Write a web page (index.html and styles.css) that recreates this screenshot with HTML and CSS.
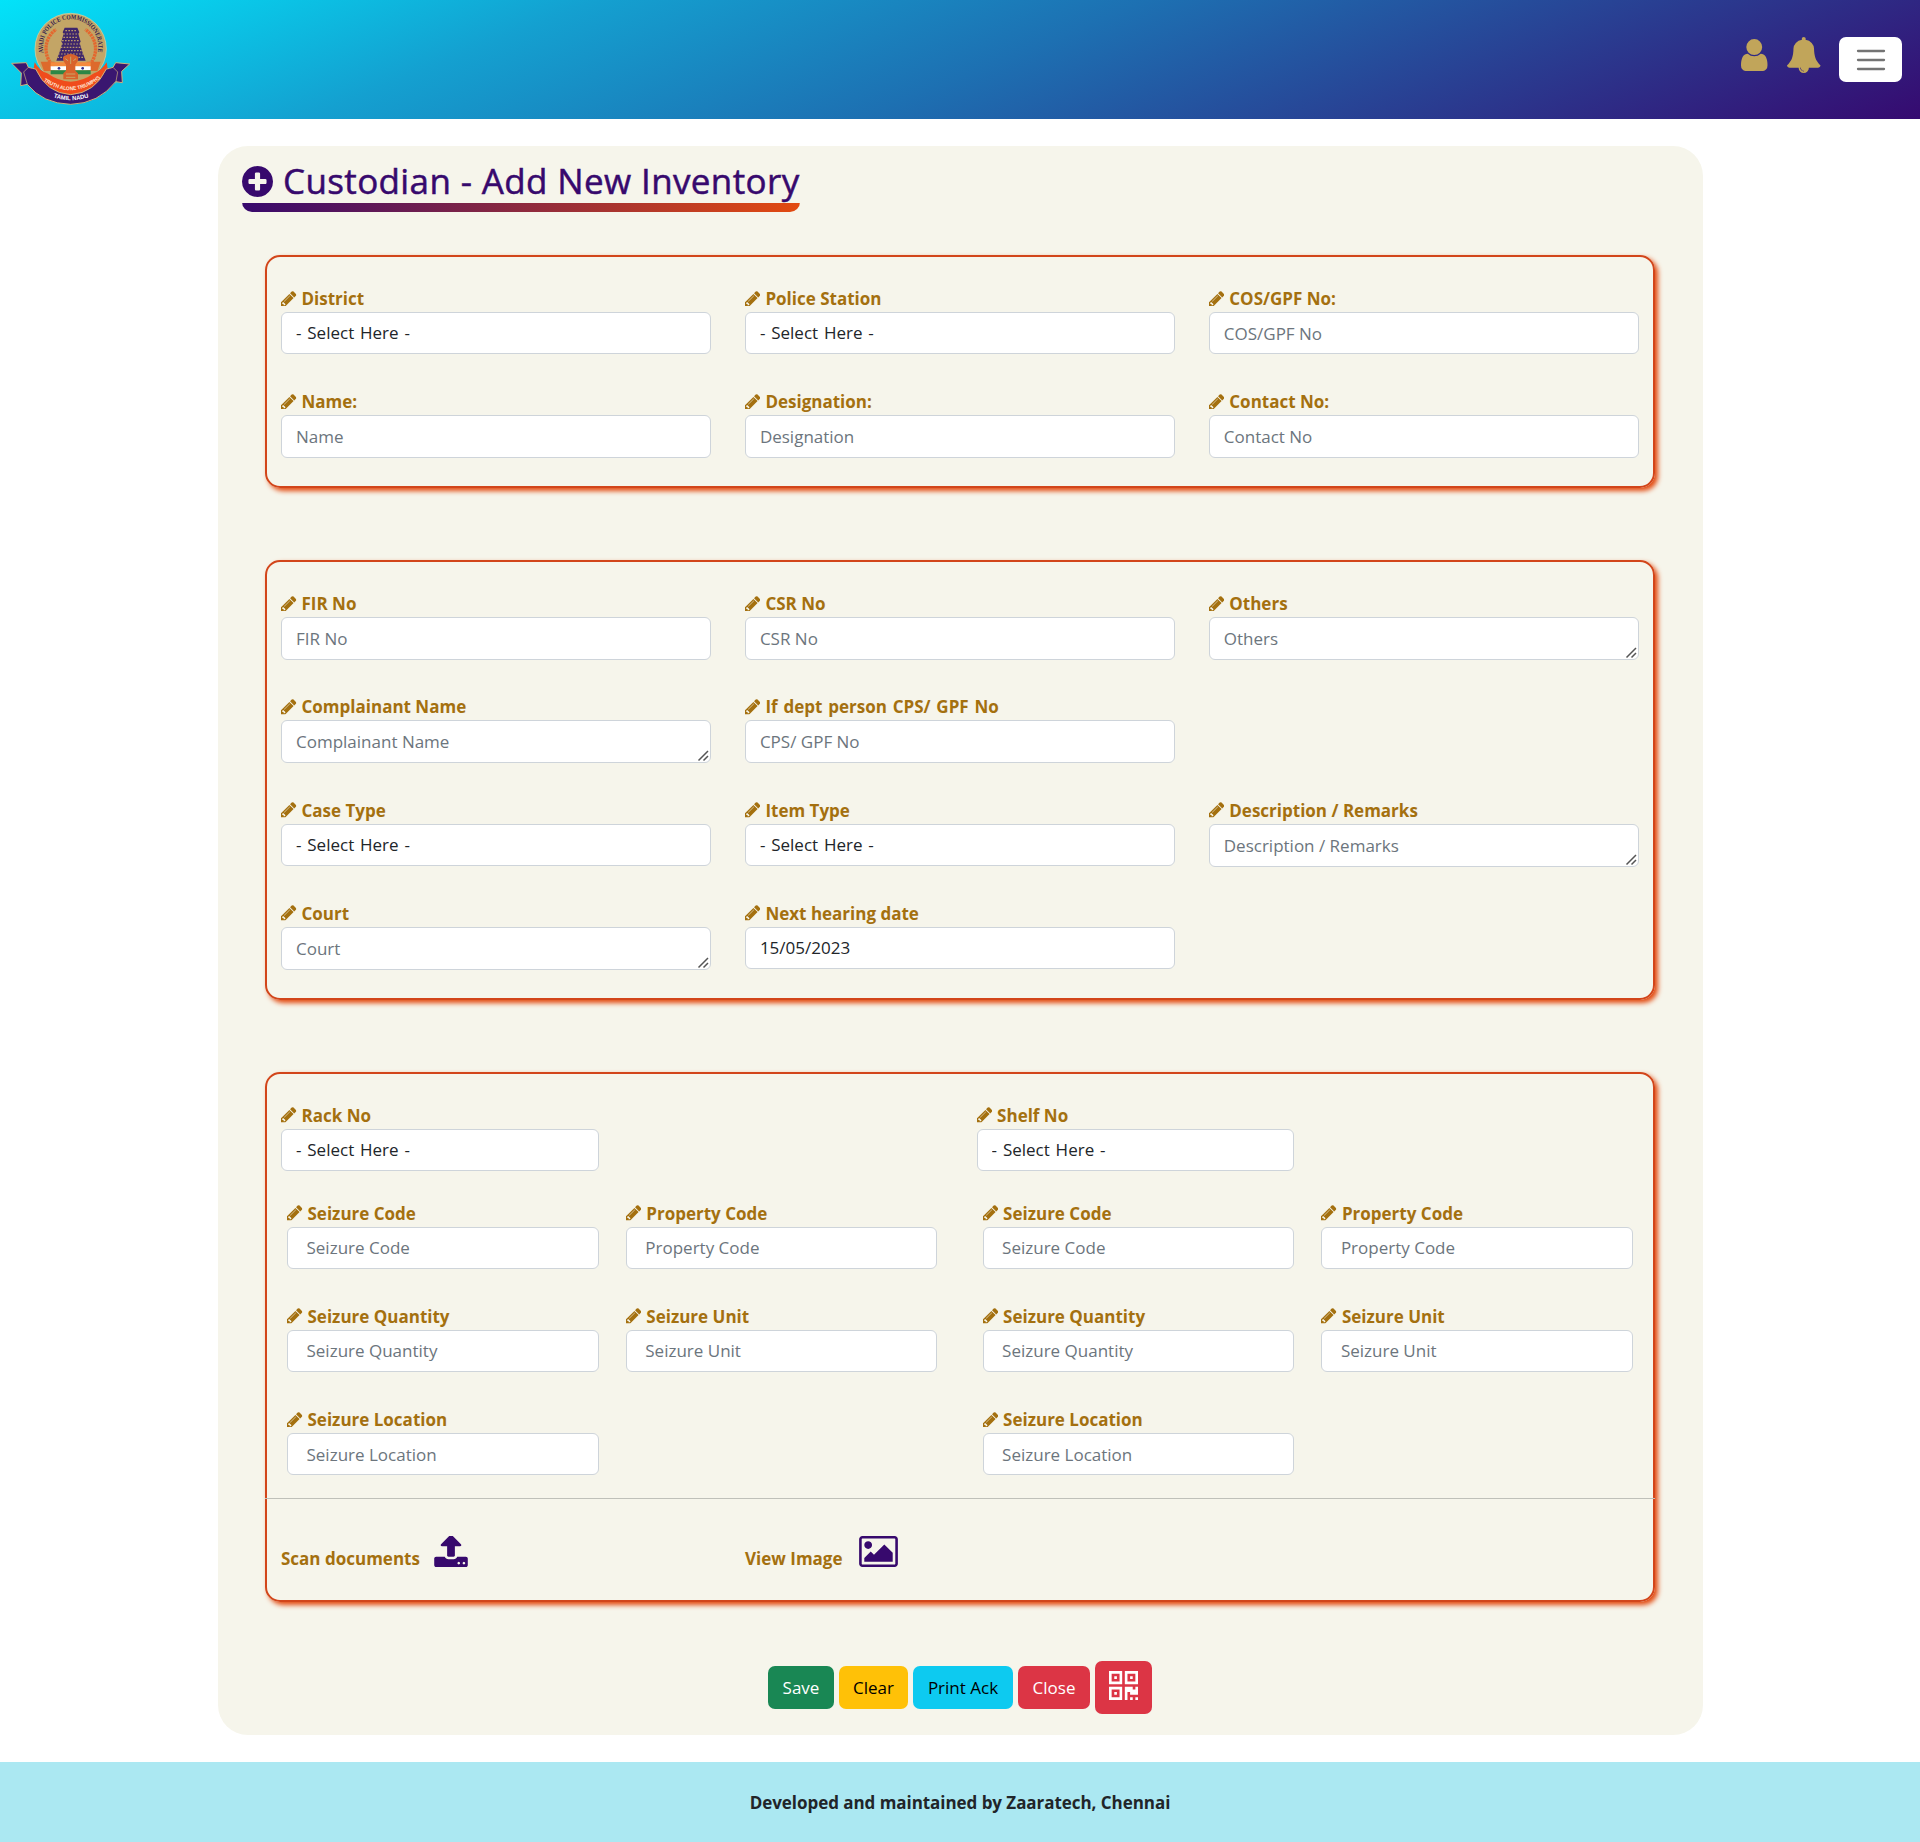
FILE: index.html
```html
<!DOCTYPE html>
<html lang="en">
<head>
<meta charset="utf-8">
<title>Custodian - Add New Inventory</title>
<link rel="stylesheet" href="styles.css">
</head>
<body>
<svg class="defs" width="0" height="0" aria-hidden="true">
  <symbol id="pencil" viewBox="128 128 1536 1536"><path d="M491 1536l91-91-235-235-91 91v107h128v128h107zM1014 608q0-22-22-22-10 0-17 7l-542 542q-7 7-7 17 0 22 22 22 10 0 17-7l542-542q7-7 7-17zM960 416l416 416-832 832h-416v-416zM1643 512q0 53-37 90l-166 166-416-416 166-165q36-38 90-38 53 0 91 38l235 234q37 39 37 91z"/></symbol>
</svg>

<header class="topbar">
  <svg class="emblem" viewBox="0 0 450 357" role="img" aria-label="Avadi Police Commissionerate, Tamil Nadu">
    <defs>
      <path id="arc-top" d="M133 166 A83 83 0 1 1 291 166"/>
      <path id="arc-mid" d="M124 238 Q212 304 300 236"/>
      <path id="arc-low" d="M130 279 Q212 322 296 279"/>
    </defs>
    <circle cx="212" cy="147" r="107" fill="#c3a566" stroke="#e2d3a0" stroke-width="2"/>
    <path d="M155 193 A72 72 0 0 1 168 88" fill="none" stroke="#e4672e" stroke-width="10" stroke-dasharray="7 2"/>
    <path d="M270 193 A72 72 0 0 0 256 88" fill="none" stroke="#e4672e" stroke-width="10" stroke-dasharray="7 2"/>
    <path d="M122 185h42v28h-32zM302 185h-42v28h32z" fill="#dd6a2c"/>
    <path d="M194 83h38l6 14-3 4 7 24-3 4 8 26 10 27h-88l10-27 8-26-3-4 7-24-3-4z" fill="#3f266b"/>
    <path d="M196 92h34M190 102h44M190 112h44M186 122h52M184 132h58M182 142h62M177 152h72M174 162h78M172 172h82" stroke="#b79a6c" stroke-width="3.5" stroke-dasharray="5 4" fill="none"/>
    <path d="M152 187h120v12h-120z" fill="#f58a3c"/>
    <path d="M152 199h120v12h-120z" fill="#fff"/>
    <path d="M152 211h120v12h-120z" fill="#2c8746"/>
    <circle cx="177" cy="205" r="4" fill="#2d2d8c"/><circle cx="248" cy="205" r="4" fill="#2d2d8c"/>
    <path d="M104 187Q120 214 142 220 Q212 270 282 220 Q304 212 320 187L324 212Q296 282 212 286Q128 282 100 212z" fill="#f04c1c"/>
    <path d="M190 182q-4-14 8-16 14-8 28 0 12 2 8 16l-8 12v18l8 8v18h-44v-18l8-8v-18z" fill="#d8632c"/>
    <path d="M196 176l8 6M228 176l-8 6M212 170v22M198 222h28M198 232h28" stroke="#c8a766" stroke-width="3"/>
    <path d="M35 190l44-2 6 14q14 4 22 5 32 72 105 77 73-5 107-77 8-1 20-5l8-14 42 4-24 22 2 34-20-3Q296 311 212 313 128 311 82 253l-20 4 2-38z" fill="#3a1670" stroke="#cdb27c" stroke-width="3"/>
    <path d="M85 202l-14 14 11 37M339 202l14 14-6 34" fill="none" stroke="#cdb27c" stroke-width="2"/>
    <text class="emblem-ring"><textPath href="#arc-top" startOffset="8" textLength="294" lengthAdjust="spacingAndGlyphs">AVADI POLICE COMMISSIONERATE</textPath></text>
    <text class="emblem-motto"><textPath href="#arc-mid" startOffset="8" textLength="186" lengthAdjust="spacingAndGlyphs">TRUTH ALONE TRIUMPHS</textPath></text>
    <text class="emblem-state"><textPath href="#arc-low" startOffset="33" textLength="108" lengthAdjust="spacingAndGlyphs">TAMIL NADU</textPath></text>
  </svg>
  <nav class="actions">
    <svg class="icon-user" viewBox="256 128 1280 1536"><path d="M1536 1399q0 109-62.5 187t-150.5 78h-854q-88 0-150.5-78t-62.5-187q0-85 8.5-160.5t31.5-152 58.5-131 94-89 134.5-34.5q131 128 313 128t313-128q76 0 134.5 34.5t94 89 58.5 131 31.5 152 8.5 160.5zm-256-887q0 159-112.5 271.5t-271.5 112.5-271.5-112.5-112.5-271.5 112.5-271.5 271.5-112.5 271.5 112.5 112.5 271.5z"/></svg>
    <svg class="icon-bell" viewBox="64 0 1664 1792"><path d="M912 1696q0-16-16-16-59 0-101.5-42.5t-42.5-101.5q0-16-16-16t-16 16q0 73 51.5 124.5t124.5 51.5q16 0 16-16zm816-288q0 52-38 90t-90 38h-448q0 106-75 181t-181 75-181-75-75-181h-448q-52 0-90-38t-38-90q50-42 91-88t85-119.5 74.5-158.5 50-206 19.5-260q0-152 117-282.5t307-158.5q-8-19-8-39 0-40 28-68t68-28 68 28 28 68q0 20-8 39 190 28 307 158.5t117 282.5q0 139 19.5 260t50 206 74.5 158.5 85 119.5 91 88z"/></svg>
    <button class="menu" aria-label="Menu"><svg viewBox="0 0 30 30"><path d="M2 6h26M2 15h26M2 24h26" stroke="#737373" stroke-width="2.3" stroke-linecap="round"/></svg></button>
  </nav>
</header>

<main class="sheet">
  <h1 class="title"><svg viewBox="128 128 1536 1536"><path d="M1344 960v-128q0-26-19-45t-45-19h-256v-256q0-26-19-45t-45-19h-128q-26 0-45 19t-19 45v256h-256q-26 0-45 19t-19 45v128q0 26 19 45t45 19h256v256q0 26 19 45t45 19h128q26 0 45-19t19-45v-256h256q26 0 45-19t19-45zm320-64q0 209-103 385.5t-279.5 279.5-385.5 103-385.5-103-279.5-279.5-103-385.5 103-385.5 279.5-279.5 385.5-103 385.5 103 279.5 279.5 103 385.5z"/></svg><span>Custodian - Add New Inventory</span></h1>

  <section class="panel grid">
    <label class="field"><span><svg><use href="#pencil"/></svg>District</span><select><option>- Select Here -</option></select></label>
    <label class="field"><span><svg><use href="#pencil"/></svg>Police Station</span><select><option>- Select Here -</option></select></label>
    <label class="field"><span><svg><use href="#pencil"/></svg>COS/GPF No:</span><input placeholder="COS/GPF No"></label>
    <label class="field"><span><svg><use href="#pencil"/></svg>Name:</span><input placeholder="Name"></label>
    <label class="field"><span><svg><use href="#pencil"/></svg>Designation:</span><input placeholder="Designation"></label>
    <label class="field"><span><svg><use href="#pencil"/></svg>Contact No:</span><input placeholder="Contact No"></label>
  </section>

  <section class="panel grid">
    <label class="field"><span><svg><use href="#pencil"/></svg>FIR No</span><input placeholder="FIR No"></label>
    <label class="field"><span><svg><use href="#pencil"/></svg>CSR No</span><input placeholder="CSR No"></label>
    <label class="field"><span><svg><use href="#pencil"/></svg>Others</span><textarea rows="1" placeholder="Others"></textarea></label>
    <label class="field"><span><svg><use href="#pencil"/></svg>Complainant Name</span><textarea rows="1" placeholder="Complainant Name"></textarea></label>
    <label class="field"><span class="wide-words"><svg><use href="#pencil"/></svg>If dept person CPS/ GPF No</span><input placeholder="CPS/ GPF No"></label>
    <label class="field row-start"><span><svg><use href="#pencil"/></svg>Case Type</span><select><option>- Select Here -</option></select></label>
    <label class="field"><span><svg><use href="#pencil"/></svg>Item Type</span><select><option>- Select Here -</option></select></label>
    <label class="field"><span><svg><use href="#pencil"/></svg>Description / Remarks</span><textarea rows="1" placeholder="Description / Remarks"></textarea></label>
    <label class="field"><span><svg><use href="#pencil"/></svg>Court</span><textarea rows="1" placeholder="Court"></textarea></label>
    <label class="field"><span><svg><use href="#pencil"/></svg>Next hearing date</span><input value="15/05/2023"></label>
  </section>

  <section class="panel storage">
    <div class="halves">
      <div class="half">
        <label class="field slot"><span><svg><use href="#pencil"/></svg>Rack No</span><select><option>- Select Here -</option></select></label>
        <div class="seizure">
          <label class="field"><span><svg><use href="#pencil"/></svg>Seizure Code</span><input placeholder="Seizure Code"></label>
          <label class="field"><span><svg><use href="#pencil"/></svg>Property Code</span><input placeholder="Property Code"></label>
          <label class="field"><span><svg><use href="#pencil"/></svg>Seizure Quantity</span><input placeholder="Seizure Quantity"></label>
          <label class="field"><span><svg><use href="#pencil"/></svg>Seizure Unit</span><input placeholder="Seizure Unit"></label>
          <label class="field"><span><svg><use href="#pencil"/></svg>Seizure Location</span><input placeholder="Seizure Location"></label>
        </div>
      </div>
      <div class="half">
        <label class="field slot"><span><svg><use href="#pencil"/></svg>Shelf No</span><select><option>- Select Here -</option></select></label>
        <div class="seizure">
          <label class="field"><span><svg><use href="#pencil"/></svg>Seizure Code</span><input placeholder="Seizure Code"></label>
          <label class="field"><span><svg><use href="#pencil"/></svg>Property Code</span><input placeholder="Property Code"></label>
          <label class="field"><span><svg><use href="#pencil"/></svg>Seizure Quantity</span><input placeholder="Seizure Quantity"></label>
          <label class="field"><span><svg><use href="#pencil"/></svg>Seizure Unit</span><input placeholder="Seizure Unit"></label>
          <label class="field"><span><svg><use href="#pencil"/></svg>Seizure Location</span><input placeholder="Seizure Location"></label>
        </div>
      </div>
    </div>
    <hr>
    <div class="media">
      <div class="media-item"><span>Scan documents</span><svg class="icon-upload" viewBox="64 128 1664 1536"><path d="M1344 1472q0-26-19-45t-45-19-45 19-19 45 19 45 45 19 45-19 19-45zm256 0q0-26-19-45t-45-19-45 19-19 45 19 45 45 19 45-19 19-45zm128-224v320q0 40-28 68t-68 28h-1472q-40 0-68-28t-28-68v-320q0-40 28-68t68-28h427q21 56 70.5 92t110.5 36h256q61 0 110.5-36t70.5-92h427q40 0 68 28t28 68zm-325-648q-17 40-59 40h-256v448q0 26-19 45t-45 19h-256q-26 0-45-19t-19-45v-448h-256q-42 0-59-40-17-39 14-69l448-448q18-19 45-19t45 19l448 448q31 30 14 69z"/></svg></div>
      <div class="media-item"><span>View Image</span><svg class="icon-image" viewBox="-64 128 1920 1536"><path d="M576 576q0 80-56 136t-136 56-136-56-56-136 56-136 136-56 136 56 56 136zm1024 384v448h-1408v-192l320-320 160 160 512-512zm96-704h-1600q-13 0-22.5 9.5t-9.5 22.5v1216q0 13 9.5 22.5t22.5 9.5h1600q13 0 22.5-9.5t9.5-22.5v-1216q0-13-9.5-22.5t-22.5-9.5zm160 32v1216q0 66-47 113t-113 47h-1600q-66 0-113-47t-47-113v-1216q0-66 47-113t113-47h1600q66 0 113 47t47 113z"/></svg></div>
    </div>
  </section>

  <div class="buttons">
    <button class="btn save">Save</button>
    <button class="btn clear">Clear</button>
    <button class="btn print">Print Ack</button>
    <button class="btn close">Close</button>
    <button class="btn qr" aria-label="QR code"><svg viewBox="192 128 1408 1408"><path d="M576 1152v128h-128v-128h128zm0-768v128h-128v-128h128zm768 0v128h-128v-128h128zm-1024 1023h384v-383h-384v383zm0-767h384v-384h-384v384zm768 0h384v-384h-384v384zm-256 256v640h-640v-640h640zm512 512v128h-128v-128h128zm256 0v128h-128v-128h128zm0-512v384h-384v-128h-128v384h-128v-640h384v128h128v-128h128zm-768-768v640h-640v-640h640zm768 0v640h-640v-640h640z"/></svg></button>
  </div>
</main>

<footer class="credit">Developed and maintained by Zaaratech, Chennai</footer>
</body>
</html>
```
FILE: styles.css
```css
* { box-sizing: border-box; }

body {
  margin: 0;
  background: #fff;
  color: #212529;
  font-family: "Segoe UI", "Open Sans", sans-serif;
  font-size: 17px;
}

svg { fill: currentColor; display: block; }
.defs { position: absolute; }

.topbar {
  height: 119px;
  display: flex;
  justify-content: space-between;
  background: linear-gradient(158deg, #02e3f9 0%, #14a0d0 27%, #1d70b2 52%, #360a70 100%);
}
.emblem { width: 150px; height: 119px; }
.emblem text { font-family: "Liberation Serif", serif; font-weight: 700; }
.emblem .emblem-ring { font-size: 20px; fill: #33204f; }
.emblem .emblem-motto { font-family: "Liberation Sans", sans-serif; font-size: 16px; fill: #ffe9d8; }
.emblem .emblem-state { font-family: "Liberation Sans", sans-serif; font-size: 18px; fill: #fff; }

.actions {
  display: flex;
  align-items: flex-start;
  padding: 37px 18px 0 0;
  color: #c1a55a;
}
.icon-user { width: 26.5px; height: 32px; margin: 2px 19.5px 0 0; }
.icon-bell { width: 33.5px; height: 36px; margin-right: 18.5px; }
.menu {
  width: 63px;
  height: 45px;
  padding: 0;
  border: 0;
  border-radius: 7px;
  background: #fff;
  display: flex;
  align-items: center;
  justify-content: center;
}
.menu svg { width: 30px; height: 30px; }

.sheet {
  width: 1485px;
  height: 1589px;
  margin: 27px 0 27px 218px;
  padding: 16px 47px 0;
  border-radius: 30px;
  background: #f6f5eb;
}

.title {
  width: 558px;
  height: 50px;
  margin: 0 0 43px -23px;
  padding-bottom: 12px;
  display: flex;
  align-items: center;
  gap: 10px;
  border-radius: 0 0 10px 10px;
  background: linear-gradient(90deg, #37096d, #e34a10) bottom / 100% 9px no-repeat;
  color: #37096d;
  font-size: 35px;
  font-weight: 500;
  letter-spacing: 0.37px;
  white-space: nowrap;
  -webkit-text-stroke: 0.5px #37096d;
}
.title svg { width: 31px; height: 31px; }
.title span { padding-bottom: 2px; }

.panel {
  width: 1390px;
  margin-bottom: 72px;
  padding: 28px 14px 28.6px;
  border: 2px solid #d2451a;
  border-radius: 15px;
  box-shadow: 3px 3px 5px #e34a10;
}
.grid {
  display: grid;
  grid-template-columns: repeat(3, 430px);
  gap: 33.8px 33.9px;
}
.row-start { grid-column-start: 1; }

.field { display: block; height: 69.4px; }
.field > span {
  height: 27px;
  display: flex;
  align-items: center;
  gap: 5px;
  color: #a4700f;
  font-weight: 700;
  white-space: nowrap;
}
.field > .wide-words { word-spacing: 1.4px; }
.field > span svg { width: 15.5px; height: 15.5px; }
.field input, .field select, .field textarea {
  width: 100%;
  height: 42.4px;
  display: block;
  margin: 0;
  padding: 0 14px;
  border: 1px solid #ced4da;
  border-radius: 6px;
  background: #fff;
  color: #212529;
  font: inherit;
  line-height: 40px;
  appearance: none;
}
.field select { word-spacing: 1.4px; }
.field textarea { height: 43px; padding-top: 1px; overflow: hidden; }
.field textarea::-webkit-resizer {
  background: url("data:image/svg+xml,%3Csvg xmlns='http://www.w3.org/2000/svg' width='15' height='15'%3E%3Cpath d='M3.5 13.5L13 4M8.5 13.5L13 9' stroke='%23555' stroke-width='1.5'/%3E%3C/svg%3E") right bottom no-repeat;
}
.field ::placeholder { color: #6c757d; opacity: 1; }

.storage { height: 530px; padding: 28px 0 0; margin-bottom: 59px; }
.halves { display: flex; padding-left: 14px; }
.half { flex: none; width: 695.6px; }
.half + .half { width: 660px; }
.slot { width: 317.5px; }
.seizure {
  display: grid;
  grid-template-columns: 311.5px 311.5px;
  gap: 33.8px 27.3px;
  padding: 28.4px 0 22.4px 6px;
}
.seizure input { padding: 0 18.5px; }
.storage hr { margin: 0 -2px; border: 0; height: 1px; background: #bfc0b9; position: relative; }
.media { display: grid; grid-template-columns: 464px 464px; padding: 37.5px 0 0 14px; }
.media-item { display: flex; gap: 14px; color: #a4700f; font-weight: 700; }
.media-item + .media-item { gap: 17px; }
.media-item span { line-height: 24px; padding-top: 11px; }
.media-item svg { color: #37096d; height: 31px; }
.icon-upload { width: 34px; }
.icon-image { width: 39px; }

.buttons { display: flex; justify-content: center; align-items: center; gap: 5px; margin-right: 1px; }
.btn {
  height: 43px;
  padding: 0;
  border: 0;
  border-radius: 7px;
  color: #fff;
  font: inherit;
  line-height: 43px;
}
.save { width: 66px; background: #198754; }
.clear { width: 69px; background: #ffc107; color: #000; }
.print { width: 100px; background: #0dcaf0; color: #000; }
.close { width: 72px; background: #dc3545; }
.qr { width: 57px; height: 53px; background: #dc3545; padding: 0 14px 4px; }
.qr svg { width: 29px; height: 29px; }

.credit {
  height: 80px;
  background: #abe8f2;
  font-weight: 700;
  letter-spacing: -0.05px;
  text-align: center;
  line-height: 81px;
}
```
